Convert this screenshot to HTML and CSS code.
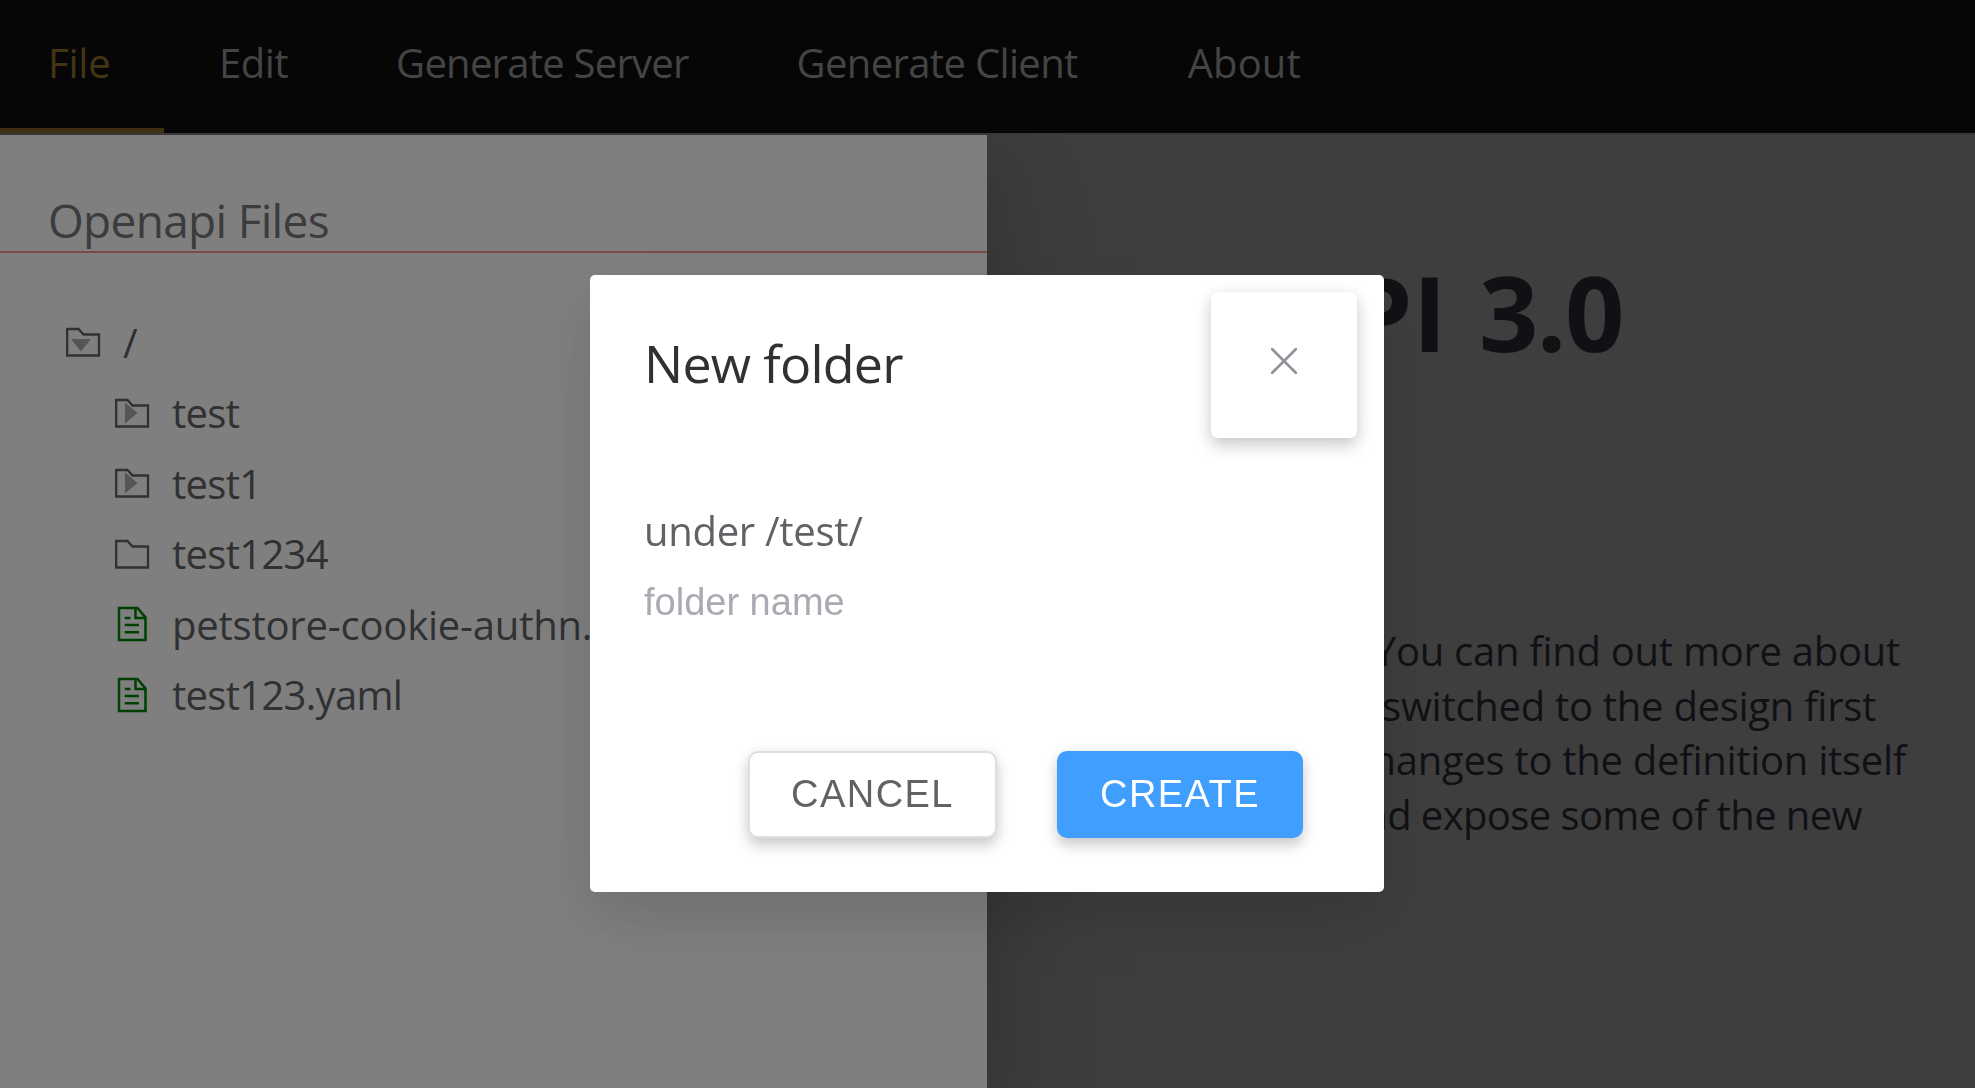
FILE: index.html
```html
<!DOCTYPE html>
<html lang="en">
<head>
<meta charset="utf-8">
<title>OpenAPI Editor</title>
<link rel="stylesheet" href="styles.css">
</head>
<body>
<nav class="menu">
  <a class="item active">File</a>
  <a class="item">Edit</a>
  <a class="item server">Generate Server</a>
  <a class="item client">Generate Client</a>
  <a class="item about">About</a>
</nav>
<main class="panes">
  <section class="files">
    <h2 class="files-title">Openapi Files</h2>
    <ul class="tree">
      <li class="node root">
        <svg class="icon" viewBox="0 0 36 36"><path class="line" d="M2.200 5H13.500L18.500 10.500H34V31.500H2.200Z"/><path class="arrow" d="M6 15H26L16 27.500Z"/></svg>
        <span>/</span>
      </li>
      <li class="node">
        <svg class="icon" viewBox="0 0 36 36"><path class="line" d="M2.200 5H13.500L18.500 10.500H34V31.500H2.200Z"/><path class="arrow" d="M11 7.500V28.500L23.500 18Z"/></svg>
        <span>test</span>
      </li>
      <li class="node">
        <svg class="icon" viewBox="0 0 36 36"><path class="line" d="M2.200 5H13.500L18.500 10.500H34V31.500H2.200Z"/><path class="arrow" d="M11 7.500V28.500L23.500 18Z"/></svg>
        <span>test1</span>
      </li>
      <li class="node">
        <svg class="icon" viewBox="0 0 36 36"><path class="line" d="M2.200 5H13.500L18.500 10.500H34V31.500H2.200Z"/></svg>
        <span>test1234</span>
      </li>
      <li class="node long">
        <svg class="icon doc" viewBox="0 0 36 36"><path class="line" d="M5 2H23.500L31.500 11.500V34H5ZM21.500 2V12H31.500M10.700 12H16.500M10.700 19H25M10.700 26.300H25"/></svg>
        <span>petstore-cookie-authn.yaml</span>
      </li>
      <li class="node">
        <svg class="icon doc" viewBox="0 0 36 36"><path class="line" d="M5 2H23.500L31.500 11.500V34H5ZM21.500 2V12H31.500M10.700 12H16.500M10.700 19H25M10.700 26.300H25"/></svg>
        <span>test123.yaml</span>
      </li>
    </ul>
  </section>
  <section class="preview">
    <h1 class="doc-title">OpenAPI <span class="version">3.0</span></h1>
    <p class="doc-text">
      <span class="l1">You can find out more about</span>
      <span class="l2">switched to the design first</span>
      <span class="l3">changes to the definition itself</span>
      <span class="l4">and expose some of the new</span>
    </p>
  </section>
</main>
<div class="overlay">
  <div class="dialog" role="dialog">
    <header class="dialog-head">
      <h3 class="dialog-title">New folder</h3>
      <button class="close" aria-label="Close"><svg viewBox="0 0 26 26"><path d="M1 1L25 25M25 1L1 25"/></svg></button>
    </header>
    <div class="dialog-body">
      <p class="path">under /test/</p>
      <input class="name" placeholder="folder name">
    </div>
    <footer class="dialog-foot">
      <button class="btn">CANCEL</button>
      <button class="btn primary">CREATE</button>
    </footer>
  </div>
</div>
</body>
</html>
```
FILE: styles.css
```css
* { box-sizing: border-box; }
body { margin: 0; width: 1975px; height: 1088px; overflow: hidden; background: #fff; font-family: "Open Sans", "Noto Sans", sans-serif; display: flex; flex-direction: column; }
h1, h2, h3, p, ul { margin: 0; padding: 0; font-weight: 400; }

.menu { position: relative; z-index: 2; height: 135px; flex: none; display: flex; background: #0c0c0c; border-bottom: 2px solid #707070; }
.item { height: 133px; padding: 0 54px 8px; line-height: 125px; font-size: 40px; font-weight: 500; letter-spacing: -0.5px; color: #888; white-space: nowrap; }
.item.active { width: 164px; margin-right: 1px; padding-left: 48px; padding-right: 0; letter-spacing: -0.2px; color: #866b26; border-bottom: 5px solid #7c6224; }
.server { letter-spacing: -0.75px; }
.client { letter-spacing: -0.65px; }
.about { margin-left: 2px; letter-spacing: 0.1px; }

.panes { flex: 1; display: flex; }
.files { position: relative; z-index: 1; width: 987px; background: #fff; box-shadow: 0 43px 129px 43px rgba(0, 0, 0, .08), 0 32px 86px rgba(0, 0, 0, .12), 0 21px 43px -21px rgba(0, 0, 0, .16); }
.files-title { height: 118px; padding: 49px 0 0 48px; border-bottom: 2px solid #f0988a; font-size: 46px; line-height: 72px; letter-spacing: -0.7px; color: #75787d; }
.tree { list-style: none; padding: 54px 0 0 114px; }
.node { height: 70.5px; display: flex; align-items: center; font-size: 40px; letter-spacing: -0.7px; color: #606266; white-space: nowrap; }
.node.root { margin-left: -49px; }
.node.long { letter-spacing: -0.2px; }
.icon { width: 36px; height: 36px; margin-right: 22px; flex: none; }
.line { fill: none; stroke: #606266; stroke-width: 2.300; }
.arrow { fill: #a8abb2; }
.doc .line { stroke: #008000; stroke-width: 2.500; }

.preview { width: 988px; background: #7d7d7d; }
.doc-title { padding: 102px 0 0; width: 636px; text-align: right; font-size: 104px; line-height: 150px; font-weight: 700; color: #20232a; white-space: nowrap; }
.version { margin-left: 5px; letter-spacing: -1.500px; }
.doc-text { padding-top: 237px; display: flex; flex-direction: column; align-items: flex-end; font-size: 40px; line-height: 54.5px; letter-spacing: -0.28px; color: #20232a; }
.l1 { margin-right: 75px; }
.l2 { margin-right: 99px; }
.l3 { margin-right: 69px; }
.l4 { margin-right: 113px; letter-spacing: -0.6px; }

.overlay { position: fixed; z-index: 3; inset: 0; background: rgba(0, 0, 0, .5); padding: 275px 591px 196px 590px; }
.dialog { height: 617px; background: #fff; border-radius: 5px; box-shadow: 0 32px 86px 11px rgba(0, 0, 0, .05), 0 22px 54px rgba(0, 0, 0, .09); }
.dialog-head { height: 164px; padding: 17px 27px 0 54px; display: flex; justify-content: space-between; }
.dialog-title { font-size: 52px; line-height: 142px; letter-spacing: -0.75px; color: #303133; }
.close { width: 146px; height: 146px; padding: 0 0 6px; border: 0; border-radius: 7px; background: #fff; box-shadow: 0 8px 16px rgba(0, 0, 0, .18), 0 0 16px rgba(0, 0, 0, .06); }
.close svg { width: 26px; height: 26px; fill: none; stroke: #909399; stroke-width: 2.700; stroke-linecap: round; }
.dialog-body { height: 312px; padding: 56px 54px 0; }
.path { font-size: 40px; line-height: 72px; letter-spacing: -0.3px; color: #606266; }
.name { display: block; width: 100%; height: 70px; padding: 0; border: 0; font-family: "Liberation Sans", Arial, sans-serif; font-size: 38px; color: #606266; }
.name::placeholder { color: #a8abb2; }
.dialog-foot { padding-left: 158px; display: flex; gap: 60px; }
.btn { width: 249px; height: 87px; border: 2px solid #dcdfe6; border-radius: 10px; background: #fff; font-family: "Liberation Sans", Arial, sans-serif; font-size: 38px; letter-spacing: 1.450px; color: #606266; box-shadow: 0 8px 14px rgba(0, 0, 0, .18), 0 0 14px rgba(0, 0, 0, .06); }
.primary { width: 246px; border-color: #409eff; background: #409eff; color: #fff; }
```
